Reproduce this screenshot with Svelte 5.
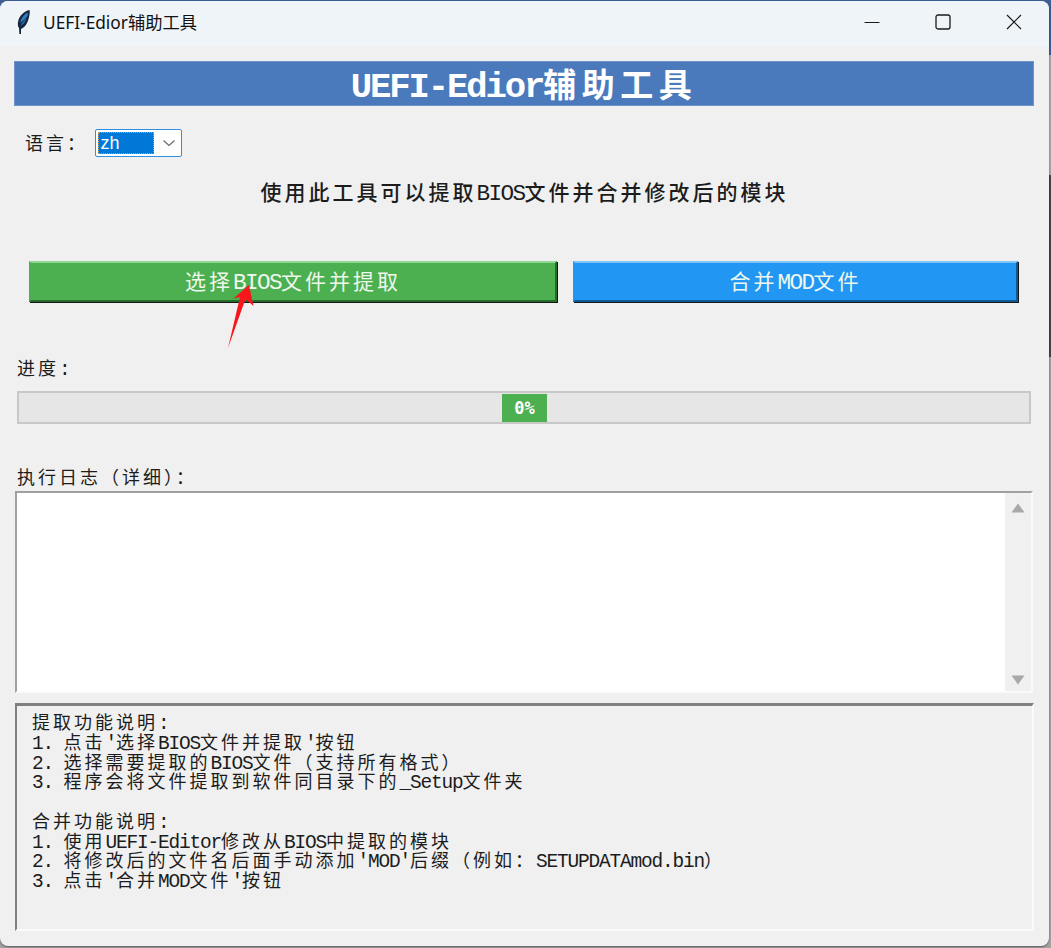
<script lang="ts">
  const runs = (s: string) =>
    s.split(/([\x20-\x7e]+)/).filter(Boolean).map((t) => ({ t, lat: /^[\x20-\x7e]/.test(t) }));

  const notes = [
    '提取功能说明:',
    "1. 点击'选择BIOS文件并提取'按钮",
    '2. 选择需要提取的BIOS文件（支持所有格式）',
    '3. 程序会将文件提取到软件同目录下的_Setup文件夹',
    '',
    '合并功能说明:',
    '1. 使用UEFI-Editor修改从BIOS中提取的模块',
    "2. 将修改后的文件名后面手动添加'MOD'后缀（例如：SETUPDATAmod.bin）",
    "3. 点击'合并MOD文件'按钮",
  ];
</script>

{#snippet txt(s)}{#each runs(s) as r}<span class:lat={r.lat} class:cjk={!r.lat}>{r.t}</span>{/each}{/snippet}

<div class="window">
  <header class="titlebar">
    <svg class="feather" width="16" height="26" viewBox="0 0 16 26">
      <path d="M13.500 1 C8 2 3 7 2 13 C1.600 16 2 18 3 19 L3.400 25 L5 25 L5 20 C9 18.500 11.500 14 12.500 10 C13.500 7 14.200 3 13.500 1Z" fill="#16263d" />
      <path d="M12 3.500 C8.500 5 5 9 4 14 C6.500 12 9.500 10 11.500 7Z" fill="#2f7fc8" />
      <path d="M10.500 9 C8.500 11 6 13.500 4.500 16.500 C7 16 9.500 13 10.500 9Z" fill="#2a6fb4" />
    </svg>
    <span class="wintitle">UEFI-Edior辅助工具</span>
    <div class="controls">
      <svg width="16" height="16" viewBox="0 0 16 16"><path d="M0.500 8.500H15.500" stroke="#1a1a1a" stroke-width="1.200" /></svg>
      <svg width="16" height="16" viewBox="0 0 16 16" fill="none"><rect x="1" y="1" width="14" height="14" rx="2" stroke="#1a1a1a" stroke-width="1.300" /></svg>
      <svg width="16" height="16" viewBox="0 0 16 16"><path d="M1 1L15 15M15 1L1 15" stroke="#1a1a1a" stroke-width="1.200" /></svg>
    </div>
  </header>

  <main class="content">
    <h1 class="banner">{@render txt('UEFI-Edior辅助工具')}</h1>

    <div class="langrow">
      <span class="langlabel">{@render txt('语言：')}</span>
      <div class="select">
        <span class="selected">zh</span>
        <svg width="14" height="8" viewBox="0 0 14 8" fill="none"><path d="M1.500 1.500L7 6.500L12.500 1.500" stroke="#6a6a6a" stroke-width="1.200" /></svg>
      </div>
    </div>

    <p class="subtitle">{@render txt('使用此工具可以提取BIOS文件并合并修改后的模块')}</p>

    <div class="buttons">
      <button class="btn green">{@render txt('选择BIOS文件并提取')}</button>
      <button class="btn blue">{@render txt('合并MOD文件')}</button>
      <svg class="arrow" width="28" height="64" viewBox="0 0 28 64">
        <path d="M23 0L27.500 21L19.500 14L2 63L14 12L7.500 13.500Z" fill="#f8161c" />
      </svg>
    </div>

    <div class="label progresslabel">{@render txt('进度:')}</div>
    <div class="progress">
      <div class="chunk">0%</div>
    </div>

    <div class="label loglabel">{@render txt('执行日志（详细）：')}</div>
    <div class="log">
      <div class="logtext"></div>
      <div class="scroll">
        <svg width="14" height="10" viewBox="0 0 14 10"><path d="M7 0.500L13.500 9.500H0.500Z" fill="#a8a8a8" /></svg>
        <svg width="14" height="10" viewBox="0 0 14 10"><path d="M0.500 0.500H13.500L7 9.500Z" fill="#a8a8a8" /></svg>
      </div>
    </div>

    <div class="notes">
      {#each notes as line}
        <div class="noteline">{@render txt(line)}</div>
      {/each}
    </div>
  </main>
</div>

<style>
  :global(body) {
    margin: 0;
    width: 1051px;
    height: 948px;
    overflow: hidden;
    background: linear-gradient(
      #3d5f92 0,
      #3d5f92 55px,
      #a9abae 55px,
      #a9abae 175px,
      #454545 175px,
      #454545 357px,
      #a3a3a3 357px,
      #a3a3a3 948px
    );
  }

  .window {
    width: 1049px;
    height: 945px;
    margin-top: 1px;
    border-radius: 8px;
    overflow: hidden;
    background: #f0f0f0;
    box-shadow: 0 1px 2px rgba(0, 0, 0, 0.45);
    font-family: 'Liberation Mono', 'Noto Sans CJK SC', monospace;
    color: #1c1c1c;
  }

  .cjk {
    font-family: 'Noto Sans CJK SC', sans-serif;
    letter-spacing: calc(var(--p) - 1em);
  }

  .lat {
    font-family: 'Liberation Mono', monospace;
    font-size: 1.08em;
    letter-spacing: calc(var(--p) / 2 - 0.6em);
    white-space: pre;
  }

  .titlebar {
    display: flex;
    align-items: center;
    box-sizing: border-box;
    height: 45px;
    padding: 0 0 4px 16px;
    background: #eff4f9;
  }

  .feather {
    margin-right: 11px;
  }

  .wintitle {
    font-family: 'Noto Sans', 'Noto Sans CJK SC', sans-serif;
    font-size: 17.3px;
    color: #111;
  }

  .controls {
    display: flex;
    gap: 55px;
    margin-left: auto;
    margin-right: 27px;
  }

  .content {
    display: flex;
    flex-direction: column;
    padding: 15px 14px 0 14px;
  }

  .banner {
    --p: 38.500px;
    margin: 0;
    width: 1020px;
    height: 45px;
    box-sizing: border-box;
    border: 1px solid #6f93c8;
    background: #4a7abc;
    color: #fff;
    font-size: 33px;
    font-weight: 700;
    line-height: 42px;
    text-align: center;
    white-space: nowrap;
  }

  .langrow {
    display: flex;
    align-items: center;
    margin-top: 23px;
    padding-left: 11px;
  }

  .langlabel {
    --p: 21px;
    width: 70px;
    padding-bottom: 2px;
    font-size: 18px;
    white-space: nowrap;
  }

  .select {
    display: flex;
    align-items: center;
    box-sizing: border-box;
    width: 87px;
    height: 28px;
    border: 1.500px solid #2f8fe0;
    border-radius: 2px;
    background: #fff;
    padding-left: 1.500px;
  }

  .select svg {
    margin-left: 8px;
  }

  .selected {
    box-sizing: border-box;
    width: 56px;
    height: 22px;
    padding-left: 3px;
    background: #0078d7;
    outline: 1px dotted #e09a4a;
    outline-offset: -1px;
    color: #fff;
    font-family: 'Liberation Sans', sans-serif;
    font-size: 18px;
    line-height: 23px;
  }

  .subtitle {
    --p: 24px;
    margin: 18px 0 0 0;
    height: 32px;
    font-size: 21px;
    font-weight: 500;
    line-height: 32px;
    text-align: center;
    white-space: nowrap;
  }

  .buttons {
    position: relative;
    display: flex;
    gap: 16px;
    margin: 54px 0 0 15px;
  }

  .btn {
    --p: 24px;
    box-sizing: border-box;
    height: 41px;
    padding: 0;
    border: 2px solid;
    color: #eef7ee;
    font-size: 21px;
    line-height: 34px;
    white-space: nowrap;
    box-shadow: 1px 1px 0 #151515;
  }

  .green {
    width: 528px;
    background: #4caf50;
    border-color: #93d795 #256b29 #256b29 #4caf50;
  }

  .blue {
    width: 445px;
    background: #2196f3;
    border-color: #7cc4fa #0f5a96 #0f5a96 #2196f3;
  }

  .arrow {
    position: absolute;
    left: 197px;
    top: 24px;
  }

  .label {
    --p: 21px;
    margin-left: 3px;
    font-size: 18px;
    line-height: 24px;
    white-space: nowrap;
  }

  .progresslabel {
    margin-top: 53px;
  }

  .progress {
    position: relative;
    box-sizing: border-box;
    width: 1014px;
    height: 33px;
    margin: 9px 0 0 3px;
    border: 2px solid #c8c8c8;
    background: #e6e6e6;
  }

  .chunk {
    position: absolute;
    left: 483px;
    top: 1px;
    width: 45px;
    height: 28px;
    background: #4caf50;
    color: #fff;
    font-family: 'DejaVu Sans Mono', monospace;
    font-size: 17px;
    font-weight: 700;
    line-height: 28px;
    text-align: center;
  }

  .loglabel {
    margin-top: 40px;
  }

  .log {
    display: flex;
    box-sizing: border-box;
    width: 1018px;
    height: 202px;
    margin-left: 1px;
    border-style: solid;
    border-width: 2px;
    border-color: #a0a0a0 #fafafa #fafafa #a0a0a0;
  }

  .logtext {
    flex: 1;
    background: #fff;
  }

  .scroll {
    display: flex;
    flex-direction: column;
    align-items: center;
    justify-content: space-between;
    box-sizing: border-box;
    width: 26px;
    padding: 10px 0 6px 0;
    background: #f0f0f0;
  }

  .notes {
    --p: 21px;
    box-sizing: border-box;
    width: 1019px;
    height: 228px;
    margin-top: 10px;
    margin-left: 1px;
    padding: 6px 0 0 15px;
    border-style: solid;
    border-width: 3px 2px 2px 2px;
    border-color: #808080 #fafafa #fafafa #808080;
    font-size: 18px;
    line-height: 19.750px;
  }

  .noteline {
    height: 19.750px;
    white-space: nowrap;
  }
</style>
